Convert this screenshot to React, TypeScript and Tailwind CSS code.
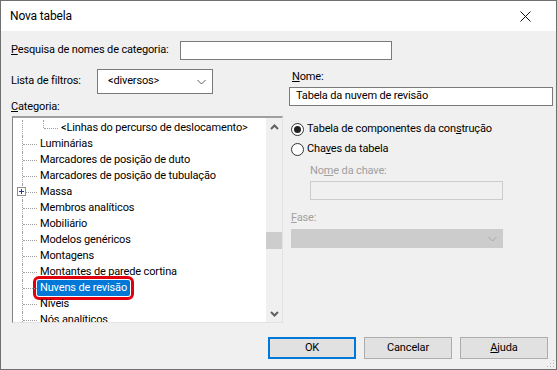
import React from "react";

const font = { fontFamily: 'Roboto, "Segoe UI", sans-serif' };

type Row = { label: string; level?: number; plus?: boolean; selected?: boolean };

const rows: Row[] = [
  { label: "<Linhas do percurso de deslocamento>", level: 1 },
  { label: "Luminárias" },
  { label: "Marcadores de posição de duto" },
  { label: "Marcadores de posição de tubulação" },
  { label: "Massa", plus: true },
  { label: "Membros analíticos" },
  { label: "Mobiliário" },
  { label: "Modelos genéricos" },
  { label: "Montagens" },
  { label: "Montantes de parede cortina" },
  { label: "Nuvens de revisão", selected: true },
  { label: "Níveis" },
  { label: "Nós analíticos" },
];

function Chevron({ color = "#606060" }: { color?: string }) {
  return (
    <svg width="9" height="6" viewBox="0 0 9 6">
      <polyline points="0.5,1 4.5,5 8.5,1" fill="none" stroke={color} strokeWidth="1" />
    </svg>
  );
}

function ScrollArrow({ up }: { up?: boolean }) {
  return (
    <svg width="9" height="6" viewBox="0 0 9 6">
      <polyline
        points={up ? "1,5 4.5,1.5 8,5" : "1,1 4.5,4.5 8,1"}
        fill="none"
        stroke="#606060"
        strokeWidth="2"
      />
    </svg>
  );
}

function TreeRow({ row }: { row: Row }) {
  const lvl = row.level ?? 0;
  return (
    <div className="relative h-[16px] flex items-center whitespace-nowrap">
      {/* trunk line */}
      <span className="absolute left-[9px] top-0 bottom-0 border-l border-dotted border-[#a0a0a0]" />
      {lvl === 1 && (
        <>
          <span className="absolute left-[30px] top-0 h-[8px] border-l border-dotted border-[#a0a0a0]" />
          <span className="absolute left-[31px] top-[8px] w-[14px] border-t border-dotted border-[#a0a0a0]" />
        </>
      )}
      {lvl === 0 && (
        <span className="absolute left-[10px] top-[8px] w-[14px] border-t border-dotted border-[#a0a0a0]" />
      )}
      {row.plus && (
        <span className="absolute left-[4px] top-[3px] w-[9px] h-[9px] bg-white border border-[#919191] flex items-center justify-center">
          <svg width="7" height="7" viewBox="0 0 7 7">
            <line x1="1" y1="3.5" x2="6" y2="3.5" stroke="#1b3d8f" />
            <line x1="3.5" y1="1" x2="3.5" y2="6" stroke="#1b3d8f" />
          </svg>
        </span>
      )}
      {row.selected ? (
        <span className="ml-[24px] h-[16px] px-[3px] flex items-center bg-[#0078d7] text-white outline-[3px] outline-solid outline-[#e0000f] outline-offset-[1px] rounded-[2px]">
          {row.label}
        </span>
      ) : (
        <span className={lvl === 1 ? "ml-[48px]" : "ml-[27px]"}>{row.label}</span>
      )}
    </div>
  );
}

export default function App() {
  return (
    <div
      className="w-[557px] h-[370px] border border-[#6f6f6f] flex flex-col text-[11px] tracking-[-0.15px] text-black bg-[#f0f0f0] overflow-hidden whitespace-nowrap"
      style={font}
    >
      {/* title bar */}
      <div className="h-[30px] shrink-0 bg-white flex items-center justify-between pl-[9px] pr-[25px]">
        <span className="text-[12px]">Nova tabela</span>
        <svg width="11" height="11" viewBox="0 0 11 11">
          <line x1="0.5" y1="0.5" x2="10.5" y2="10.5" stroke="#111" strokeWidth="1" />
          <line x1="10.5" y1="0.5" x2="0.5" y2="10.5" stroke="#111" strokeWidth="1" />
        </svg>
      </div>

      <div className="flex-1 flex flex-col pl-[10px] pr-[2px]">
        {/* search */}
        <div className="mt-[10px] h-[19px] flex items-center">
          <span className="w-[169px]">
            <u>P</u>esquisa de nomes de categoria:
          </span>
          <div className="w-[212px] h-[19px] bg-white border border-[#7a7a7a]" />
        </div>

        <div className="flex mt-[9px]">
          {/* left column */}
          <div className="w-[272px] flex flex-col">
            <div className="h-[25px] flex items-center">
              <span className="w-[86px]">Lista de filtros:</span>
              <div className="w-[116px] h-[25px] bg-white border border-[#7a7a7a] flex items-center justify-between pl-[10px] pr-[6px]">
                <span>&lt;diversos&gt;</span>
                <Chevron />
              </div>
            </div>
            <div className="mt-[5px] h-[16px] flex items-center">
              <span>
                <u>C</u>ategoria:
              </span>
            </div>
            <div className="mt-[1px] ml-[1px] w-[271px] h-[207px] bg-white border-t-2 border-l border-b border-r border-t-[#a0a0a0] border-l-[#828282] border-b-[#e3e3e3] border-r-[#e3e3e3] flex">
              <div className="flex-1 pt-[2px] overflow-hidden">
                {rows.map((r) => (
                  <TreeRow key={r.label} row={r} />
                ))}
              </div>
              <div className="w-[16px] bg-[#f0f0f0] flex flex-col items-center">
                <div className="h-[17px] flex items-center justify-center">
                  <ScrollArrow up />
                </div>
                <div className="flex-1 w-full pt-[97px]">
                  <div className="h-[17px] w-full bg-[#cdcdcd]" />
                </div>
                <div className="h-[17px] flex items-center justify-center">
                  <ScrollArrow />
                </div>
              </div>
            </div>
          </div>

          {/* right column */}
          <div className="ml-[6px] flex-1 flex flex-col">
            <div className="h-[16px] flex items-center ml-[3px]">
              <span>
                <u>N</u>ome:
              </span>
            </div>
            <div className="mt-[2px] w-[264px] h-[19px] bg-white border border-[#7a7a7a] flex items-center pl-[6px]">
              Tabela da nuvem de revisão
            </div>

            <label className="mt-[15px] h-[16px] flex items-center ml-[2px]">
              <span className="w-[13px] h-[13px] rounded-full border border-[#333] bg-white flex items-center justify-center">
                <span className="w-[7px] h-[7px] rounded-full bg-[#222]" />
              </span>
              <span className="ml-[3px]">
                Tabela de componentes da con<u>s</u>trução
              </span>
            </label>
            <label className="mt-[4px] h-[16px] flex items-center ml-[2px]">
              <span className="w-[13px] h-[13px] rounded-full border border-[#333] bg-white" />
              <span className="ml-[3px]">
                Cha<u>v</u>es da tabela
              </span>
            </label>

            <div className="mt-[6px] ml-[21px] h-[16px] flex items-center text-[#a0a0a0]">
              <span>
                No<u>m</u>e da chave:
              </span>
            </div>
            <div className="mt-[2px] ml-[21px] w-[193px] h-[19px] bg-[#f0f0f0] border border-[#cccccc]" />

            <div className="mt-[10px] ml-[2px] h-[16px] flex items-center text-[#a0a0a0]">
              <span>
                <u>F</u>ase:
              </span>
            </div>
            <div className="mt-[3px] ml-[2px] w-[212px] h-[19px] bg-[#cccccc] border border-[#cccccc] flex items-center justify-end pr-[5px]">
              <Chevron color="#a8a8a8" />
            </div>
          </div>
        </div>

        {/* buttons */}
        <div className="mt-auto mb-[10px] flex justify-end gap-[8px] pr-[6px] relative">
          <button className="w-[88px] h-[22px] bg-[#e1e1e1] border-2 border-[#0078d7]">OK</button>
          <button className="w-[88px] h-[22px] bg-[#e1e1e1] border border-[#adadad]">Cancelar</button>
          <button className="w-[88px] h-[22px] bg-[#e1e1e1] border border-[#adadad]">
            <u>A</u>juda
          </button>
          <svg className="absolute right-[-1px] bottom-[-9px]" width="8" height="8" viewBox="0 0 8 8">
            <rect x="6" y="0" width="1" height="1" fill="#b8b8b8" />
            <rect x="3" y="3" width="1" height="1" fill="#b8b8b8" />
            <rect x="6" y="3" width="1" height="1" fill="#b8b8b8" />
            <rect x="0" y="6" width="1" height="1" fill="#b8b8b8" />
            <rect x="3" y="6" width="1" height="1" fill="#b8b8b8" />
            <rect x="6" y="6" width="1" height="1" fill="#b8b8b8" />
          </svg>
        </div>
      </div>
    </div>
  );
}
